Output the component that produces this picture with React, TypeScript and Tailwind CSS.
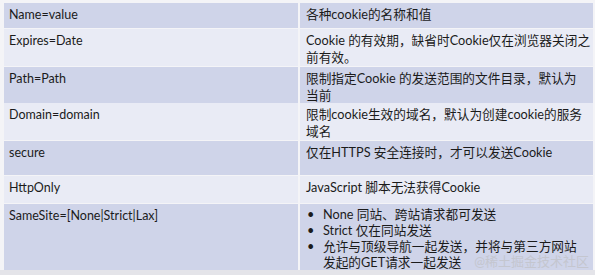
import React from "react";

const dark = "bg-[#cfd4e9]";
const light = "bg-[#e9ebf5]";

type Row = { k: string; v: React.ReactNode; h: string; bg: string };

const two = (a: string, b: string) => (
  <>
    {a}
    <br />
    {b}
  </>
);

const rows: Row[] = [
  { k: "Name=value", v: "各种cookie的名称和值", h: "h-[25px]", bg: dark },
  { k: "Expires=Date", v: two("Cookie 的有效期，缺省时Cookie仅在浏览器关闭之", "前有效。"), h: "h-[37px]", bg: light },
  { k: "Path=Path", v: two("限制指定Cookie 的发送范围的文件目录，默认为", "当前"), h: "h-[35px]", bg: dark },
  { k: "Domain=domain", v: two("限制cookie生效的域名，默认为创建cookie的服务", "域名"), h: "h-[37px]", bg: light },
  { k: "secure", v: "仅在HTTPS 安全连接时，才可以发送Cookie", h: "h-[34px]", bg: dark },
  { k: "HttpOnly", v: "JavaScript 脚本无法获得Cookie", h: "h-[27px]", bg: light },
  {
    k: "SameSite=[None|Strict|Lax]",
    v: (
      <ul className="flex flex-col leading-[16px] -mt-[1px]">
        {[
          "None 同站、跨站请求都可发送",
          "Strict 仅在同站发送",
          two("允许与顶级导航一起发送，并将与第三方网站", "发起的GET请求一起发送"),
        ].map((t, i) => (
          <li key={i} className="flex">
            <span className="w-[17px] shrink-0 pl-[1px]">•</span>
            <span>{t}</span>
          </li>
        ))}
      </ul>
    ),
    h: "h-[66px]",
    bg: dark,
  },
];

export default function App() {
  return (
    <div
      className="relative w-[595px] h-[275px] bg-[#f4f4f7] overflow-hidden text-[#1b1b1b]"
      style={{ fontFamily: "Lato, 'Noto Sans CJK SC', sans-serif" }}
    >
      <div className="pt-[3px] pl-[4px] pr-[2px] flex flex-col gap-[1px]">
        {rows.map((r, i) => (
          <div key={i} className={`grid grid-cols-[294px_1fr] gap-[2px] ${r.h}`}>
            <div className={`${r.bg} pl-[5px] pt-[3px] text-[12.5px] leading-[17px]`}>{r.k}</div>
            <div className={`${r.bg} pl-[6px] pt-[3px] text-[12.7px] leading-[16.5px] whitespace-nowrap`}>{r.v}</div>
          </div>
        ))}
      </div>
      <div className="absolute left-0 right-0 bottom-0 h-[5px] bg-[#e4e4e9]" />
      <div className="absolute right-[6px] bottom-[6px] text-[13px] leading-[15px] text-[#c4c6cf]">
        @稀土掘金技术社区
      </div>
    </div>
  );
}
